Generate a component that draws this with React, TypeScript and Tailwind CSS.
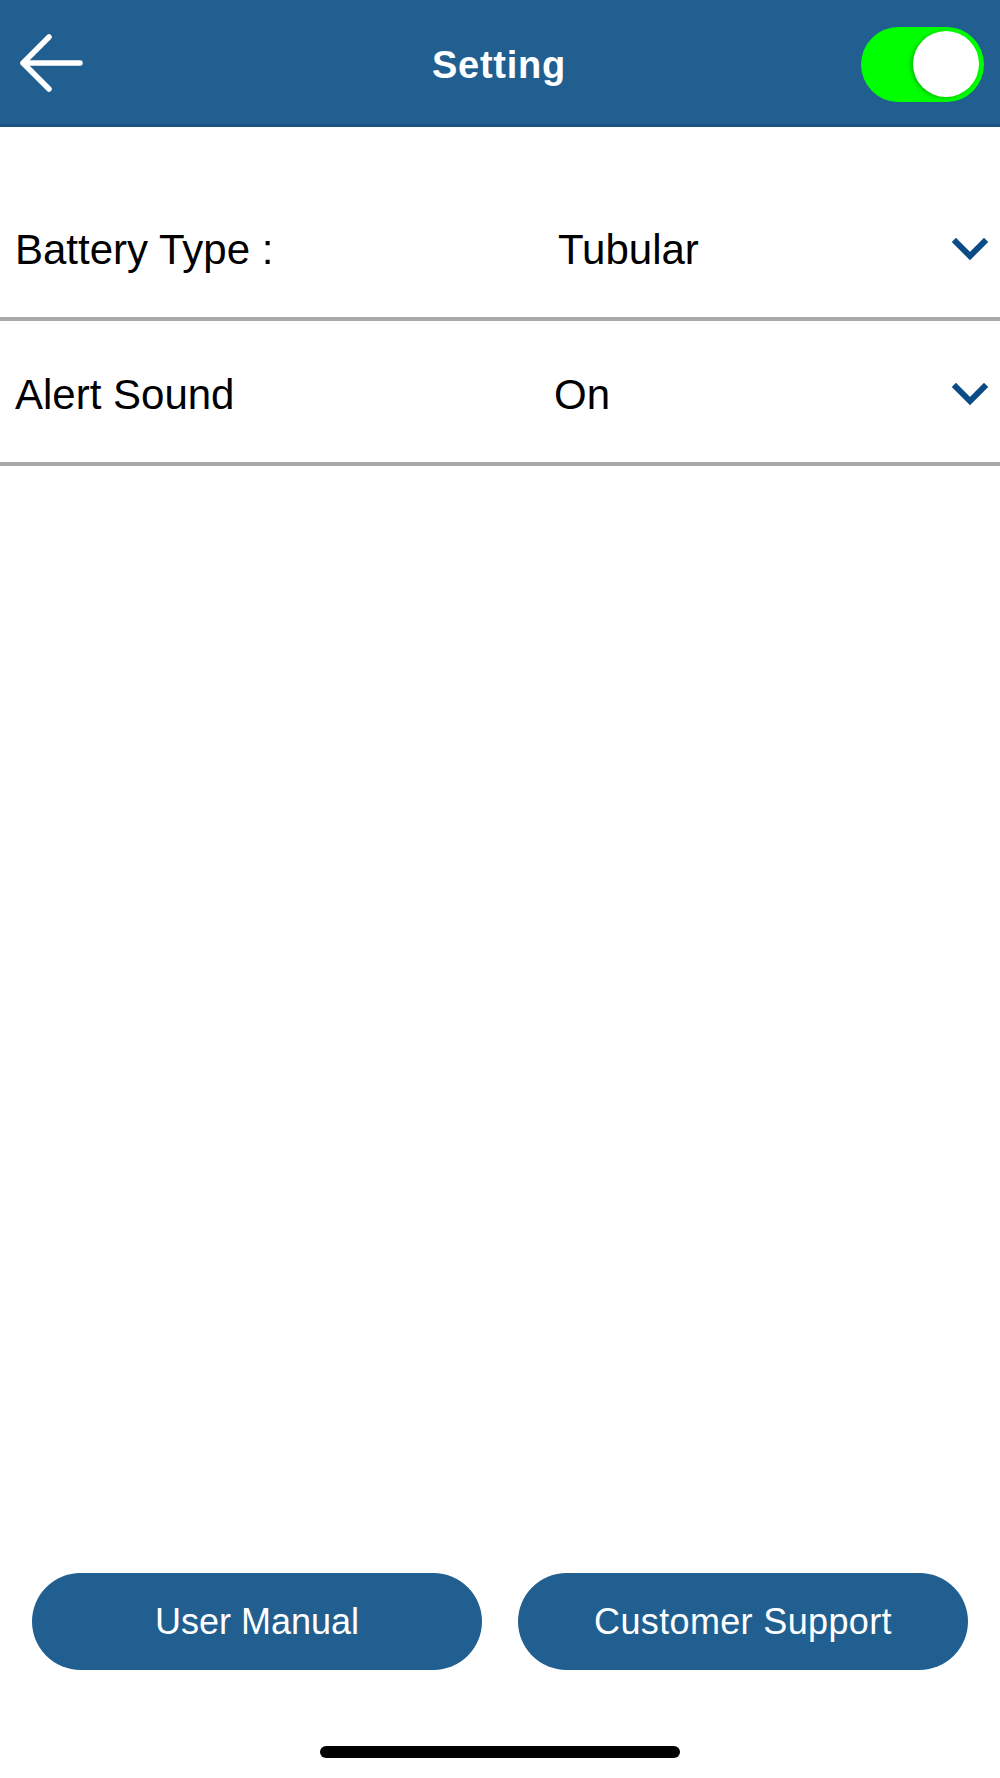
import React from 'react'

const rows = [
    { label: 'Battery Type :', value: 'Tubular', shift: '' },
    { label: 'Alert Sound', value: 'On', shift: '-ml-[4px]' },
]

function BackArrow() {
    return (
        <svg width="70" height="64" viewBox="0 0 70 64" fill="none">
            <path
                d="M66 32H9M35 6L9 32L35 58"
                stroke="white"
                strokeWidth="5.5"
                strokeLinecap="round"
                strokeLinejoin="round"
            />
        </svg>
    )
}

function Chevron() {
    return (
        <svg width="36" height="24" viewBox="0 0 36 24" fill="none">
            <path
                d="M4 4L18 18L32 4"
                stroke="#0b4b86"
                strokeWidth="6"
                strokeLinecap="square"
                strokeLinejoin="miter"
            />
        </svg>
    )
}

export default function App() {
    return (
        <div
            className="flex h-[1778px] w-full flex-col bg-white"
            style={{ fontFamily: '"Liberation Sans", Arial, sans-serif' }}
        >
            {/* Header */}
            <div className="grid h-[127px] grid-cols-[1fr_auto_1fr] items-center border-b-[3px] border-[#1a5282] bg-[#215f91] pl-[14px] pr-[16px]">
                <div className="flex items-center pt-[2px]">
                    <BackArrow />
                </div>
                <h1 className="pt-[6px] text-[38px] font-bold tracking-[0.02em] text-white">Setting</h1>
                <div className="flex justify-end pt-[4px]">
                    <div className="flex h-[75px] w-[123px] items-center justify-end rounded-full bg-[#00ff00] pr-[5px]">
                        <div className="h-[66px] w-[66px] rounded-full bg-white shadow-[-2px_1px_4px_rgba(0,0,0,0.25)]" />
                    </div>
                </div>
            </div>

            {/* Settings rows */}
            <div className="mt-[49px]">
                {rows.map((row) => (
                    <div
                        key={row.label}
                        className="flex h-[145px] items-center border-b-4 border-[#a9a9a9] pl-[15px] pr-[12px] pt-[6px] text-[42px] text-black"
                    >
                        <span className="w-[543px]">{row.label}</span>
                        <span className={`flex-1 ${row.shift}`}>{row.value}</span>
                        <Chevron />
                    </div>
                ))}
            </div>

            <div className="flex-1" />

            {/* Bottom buttons */}
            <div className="flex gap-[36px] px-[32px]">
                <button className="h-[97px] flex-1 rounded-full bg-[#215f91] text-[36px] text-white">
                    User Manual
                </button>
                <button className="h-[97px] flex-1 rounded-full bg-[#215f91] text-[36px] tracking-[0.01em] text-white">
                    Customer Support
                </button>
            </div>

            {/* Home indicator */}
            <div className="flex justify-center pb-[20px] pt-[76px]">
                <div className="h-[12px] w-[360px] rounded-full bg-black" />
            </div>
        </div>
    )
}
